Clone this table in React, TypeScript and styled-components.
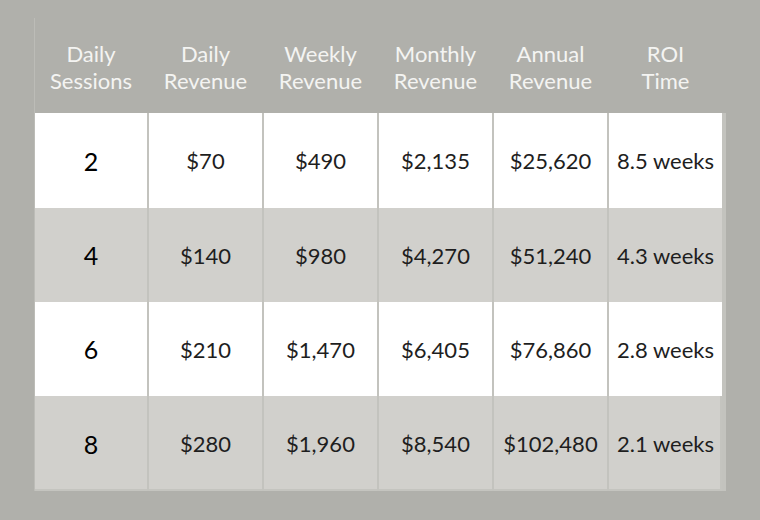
import React from "react";
import styled, { createGlobalStyle } from "styled-components";

const Global = createGlobalStyle`
  html, body { margin: 0; padding: 0; background: #b0b0ab; }
  body { font-family: Lato, "Open Sans", sans-serif; }
`;

const Page = styled.div`
  width: 760px;
  height: 520px;
  box-sizing: border-box;
  padding: 18px 0 0 34px;
  background: #b0b0ab;
`;

const Table = styled.div`
  width: 691px;
  display: flex;
  flex-direction: column;
  border-left: 1px solid #bcbcb7;
`;

const HeaderRow = styled.div`
  display: grid;
  grid-template-columns: 112px repeat(5, 113px);
  column-gap: 2px;
  height: 95px;
`;

const Body = styled.div`
  display: grid;
  grid-template-columns: 112px repeat(5, 113px);
  grid-template-rows: 95px 94px 94px 95px;
  column-gap: 2px;
  background: #c3c3be;
`;

const HeadCell = styled.div`
  display: flex;
  align-items: center;
  justify-content: center;
  text-align: center;
  color: #f4f4f2;
  font-size: 22px;
  line-height: 27px;
  padding-top: 3px;
`;

const Row = styled.div`
  display: contents;
`;

const Cell = styled.div<{ $alt: boolean; $first?: boolean; $last?: boolean; $bottom?: boolean }>`
  display: flex;
  align-items: center;
  justify-content: center;
  background: ${(p) => (p.$alt ? "#d1d0cc" : "#ffffff")};
  color: ${(p) => (p.$first ? "#000" : "#1e1e1e")};
  font-size: ${(p) => (p.$first ? "25px" : "22px")};
  white-space: nowrap;
  box-shadow: ${(p) => (p.$bottom ? "inset 0 -2px 0 #c4c4bf" : "none")}${(p) =>
    p.$last ? ", inset -2px 0 0 #c4c4bf" : ""};
`;

const headers = [
  ["Daily", "Sessions"],
  ["Daily", "Revenue"],
  ["Weekly", "Revenue"],
  ["Monthly", "Revenue"],
  ["Annual", "Revenue"],
  ["ROI", "Time"],
];

const rows = [
  ["2", "$70", "$490", "$2,135", "$25,620", "8.5 weeks"],
  ["4", "$140", "$980", "$4,270", "$51,240", "4.3 weeks"],
  ["6", "$210", "$1,470", "$6,405", "$76,860", "2.8 weeks"],
  ["8", "$280", "$1,960", "$8,540", "$102,480", "2.1 weeks"],
];

export default function App() {
  return (
    <Page>
      <Global />
      <Table>
        <HeaderRow>
          {headers.map((h) => (
            <HeadCell key={h.join()}>
              {h[0]}
              <br />
              {h[1]}
            </HeadCell>
          ))}
        </HeaderRow>
        <Body>
          {rows.map((r, i) => (
            <Row key={i}>
              {r.map((c, j) => (
                <Cell
                  key={j}
                  $alt={i % 2 === 1}
                  $first={j === 0}
                  $last={j === r.length - 1}
                  $bottom={i === rows.length - 1}
                >
                  {c}
                </Cell>
              ))}
            </Row>
          ))}
        </Body>
      </Table>
    </Page>
  );
}
